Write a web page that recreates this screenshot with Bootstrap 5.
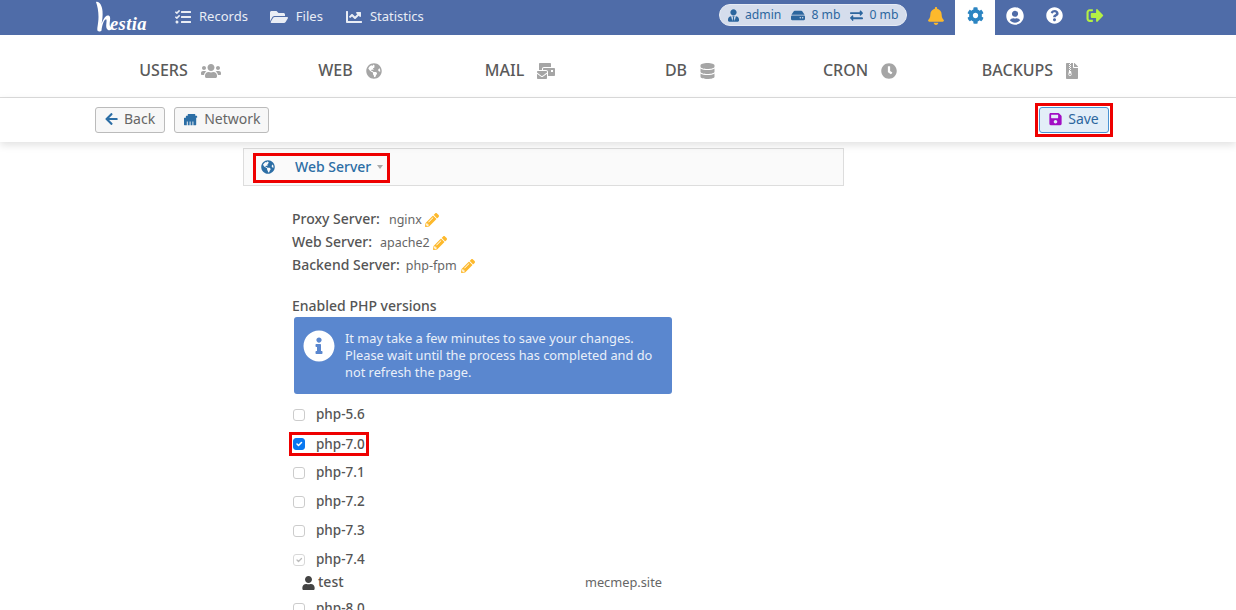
<!DOCTYPE html>
<html lang="en">
<head>
<meta charset="utf-8">
<title>Hestia</title>
<link href="https://cdn.jsdelivr.net/npm/bootstrap@5.3.0/dist/css/bootstrap.min.css" rel="stylesheet">
<style>
html,body{height:610px;overflow:hidden;background:#fff}
body{font-family:"Noto Sans","Open Sans",sans-serif;font-size:14px;color:#555;line-height:1.2}
svg.ic{fill:currentColor;display:block;flex:none}
.topbar{height:35px;background:#4f6ca8;padding-left:95px;color:#fff}
.logo-wrap{width:52px;height:35px;margin-right:28px}
.logo-txt{font-family:"Liberation Serif",serif;font-style:italic;font-weight:700;font-size:18.5px;letter-spacing:.4px;fill:#fff}
.top-link{color:#e9edf5;text-decoration:none;font-size:13px;gap:8px;margin-right:22px;padding-bottom:2px}
.top-link+.top-link+.top-link{margin-left:1px}
.pill{height:22px;width:188px;margin-left:auto;margin-bottom:5px;background:#d5ddec;border-radius:11px;color:#2c669e;font-size:12.2px;padding:0 8px;gap:6px;border:1px solid #e6ebf4;white-space:nowrap}
.pill-gap{margin-left:4px}
.bell-wrap{margin-left:21px;width:16px;color:#fdb92c;margin-bottom:4px}
.gear-tab{margin-left:11px;width:40px;height:35px;background:#fff;color:#2c85c2;padding-bottom:4px}
.right-ic{width:18px;margin-left:11px;margin-right:22px;color:#fff;margin-bottom:4px}
.right-ic+.right-ic{margin-left:0}
.exit-ic{color:#b4f044;margin-right:132px!important}
.tabsrow{height:63px;border-bottom:1px solid #ddd;padding:10px 121px 0 95px}
.tabx{width:170px;gap:13px;font-size:16px;text-decoration:none;font-weight:500;color:#5a5a5a}
.tabx svg{color:#a5a5a5}
.toolrow{height:44px;padding:5px 123px 0 95px;box-shadow:0 3px 8px rgba(0,0,0,.12);background:#fff;position:relative}
.tbtn{height:26px;padding:0 9px 2px;margin-top:4px;border:1px solid #bbb;border-radius:3px;background:#f7f7f7;color:#666;font-size:14px;gap:6px;text-decoration:none}
.tbtn svg{color:#2c6ea5}
.firstbtn{margin-right:9px}
.netbtn{gap:5px;padding-right:8px}
.savewrap{border:3px solid #e00;padding:1px;height:34px;margin-left:auto}
.savebtn{width:70px;margin-top:0;justify-content:center;background:#e3eef8;border-color:#4a93d3;color:#2c669e}
.savebtn svg{color:#a20dc4}
.mainp{padding-left:243px;padding-top:6px}
.panelb{width:601px;height:38px;border:1px solid #ddd;background:#fafafa;padding:4px 0 0 9px}
.redb{height:30px;width:137px;border:3px solid #e00;background:#fafafa;padding:0 0 2px 5px;color:#2c6ea5;font-size:14px;font-weight:500}
.redb svg{margin-right:20px}
.caretx{width:0;height:0;border:3.5px solid transparent;border-top:4px solid #aaa;border-bottom:0;margin-left:6px}
.servers{padding:22px 0 0 49px}
.srow{height:23px;font-size:14px;gap:9px;font-weight:500;color:#555}
.srow:nth-child(2){gap:8px}
.srow:nth-child(3){gap:6px}
.srow span{font-weight:400;font-size:12.5px;color:#666}
.srow a{color:#fdb92c;margin-left:-5px}
.srow:nth-child(1) a{margin-left:-6px}
.srow:nth-child(3) a{margin-left:-2px}
.phpt{font-weight:500;margin-top:18px;height:22px;padding-left:49px;font-size:14px}
.infob{margin:0 0 0 51px;width:378px;height:77px;background:#5a87cf;border-radius:3px;color:#e9eff9;font-size:12.8px;line-height:17px;padding:13px 9px 0;gap:10px}
.infob p{margin:0}
.chk{margin-left:44px;height:29px;width:97px;padding-left:6px;gap:11px;font-size:13.5px;font-weight:500;color:#555;white-space:nowrap}
.chk .form-check-input{margin:0;width:12px;height:12px;border-radius:3px;border-color:#ccc;flex:none}
.chk .form-check-input:checked{background-color:#0a78f0;border-color:#0a78f0}
.chk .form-check-input:checked:disabled{opacity:1;background-color:#fff;border-color:#d8d8d8;background-image:url("data:image/svg+xml,%3csvg xmlns='http://www.w3.org/2000/svg' viewBox='0 0 20 20'%3e%3cpath fill='none' stroke='%23bbb' stroke-linecap='round' stroke-linejoin='round' stroke-width='2.500' d='m6 10 3 3 6-6'/%3e%3c/svg%3e")}
.chkfirst{margin-top:6px}
.chkred{width:80px;height:24px;margin:3px 0 2px 46px;padding-left:1px;border:3px solid #e00}
.userline{height:17px;margin:0 0 0 59px;width:360px;font-weight:500;color:#555;gap:3px;font-size:14px}
.userline span{margin-left:auto;font-weight:400;font-size:12.8px;color:#666}
.userline svg{color:#444}
.lastchk{margin-top:3px}
</style>
</head>
<body>
<svg width="0" height="0" class="position-absolute">
<defs>
<symbol id="i-user" viewBox="0 0 448 512"><path d="M224 256c70.700 0 128-57.300 128-128S294.700 0 224 0 96 57.300 96 128s57.300 128 128 128zm89.600 32h-16.700c-22.200 10.200-46.900 16-72.900 16s-50.600-5.800-72.900-16h-16.700C60.200 288 0 348.200 0 422.400V464c0 26.500 21.500 48 48 48h352c26.500 0 48-21.500 48-48v-41.600c0-74.200-60.200-134.400-134.400-134.400z"/></symbol>
<symbol id="i-usertie" viewBox="0 0 448 512"><path d="M224 256c70.700 0 128-57.300 128-128S294.700 0 224 0 96 57.300 96 128s57.300 128 128 128zm95.800 32.600L272 480l-32-136 32-56h-96l32 56-32 136-47.800-191.400C56.900 292 0 350.300 0 422.400V464c0 26.500 21.500 48 48 48h352c26.500 0 48-21.500 48-48v-41.600c0-72.100-56.900-130.400-128.200-133.800z"/></symbol>
<symbol id="i-globe" viewBox="0 0 496 512"><path d="M248 8C111.030 8 0 119.030 0 256s111.030 248 248 248 248-111.030 248-248S384.970 8 248 8zm82.290 357.600c-3.900 3.880-7.990 7.950-11.310 11.280-2.990 3-5.100 6.700-6.170 10.710-1.510 5.660-2.730 11.380-4.770 16.870l-17.390 46.850c-13.760 3-28 4.690-42.650 4.690v-27.380c1.690-12.620-7.640-36.260-22.630-51.250-6-6-9.370-14.140-9.370-22.630v-32.010c0-11.640-6.270-22.340-16.460-27.970-14.370-7.950-34.810-19.060-48.810-26.110-11.480-5.780-22.100-13.140-31.650-21.750l-.8-.72a114.792 114.792 0 0 1-18.060-20.740c-9.380-13.770-24.660-36.420-34.590-51.140 20.470-45.500 57.360-82.040 103.200-101.890l24.010 12.010C203.480 89.740 216 82.010 216 70.110v-11.300c7.990-1.290 16.120-2.110 24.390-2.420l28.300 28.300c6.250 6.250 6.250 16.380 0 22.630L264 112l-10.340 10.340c-3.120 3.120-3.120 8.190 0 11.310l4.690 4.690c3.120 3.120 3.120 8.190 0 11.310l-8 8a8.008 8.008 0 0 1-5.660 2.340h-8.990c-2.080 0-4.080.81-5.580 2.270l-9.920 9.650a8.008 8.008 0 0 0-1.580 9.310l15.590 31.190c2.660 5.320-1.210 11.580-7.150 11.580h-5.640c-1.930 0-3.790-.7-5.240-1.960l-9.280-8.060a16.017 16.017 0 0 0-15.550-3.100l-31.170 10.390a11.950 11.950 0 0 0-8.170 11.340c0 4.530 2.560 8.660 6.610 10.690l11.080 5.540c9.410 4.710 19.790 7.160 30.310 7.160s22.590 27.290 32 32h66.750c8.490 0 16.620 3.370 22.630 9.370l13.690 13.690a30.503 30.503 0 0 1 8.930 21.570 46.536 46.536 0 0 1-13.720 32.980zM417 274.250c-5.790-1.450-10.840-5-14.150-9.970l-17.980-26.970a23.970 23.970 0 0 1 0-26.620l19.590-29.380c2.320-3.470 5.500-6.290 9.240-8.150l12.980-6.490C440.200 193.590 448 223.870 448 256c0 8.670-.74 17.160-1.820 25.540L417 274.250z"/></symbol>
<symbol id="i-clock" viewBox="0 0 512 512"><path d="M256 8C119 8 8 119 8 256s111 248 248 248 248-111 248-248S393 8 256 8zm57.100 350.100L224.900 294c-3.100-2.300-4.900-5.900-4.900-9.700V116c0-6.600 5.400-12 12-12h48c6.600 0 12 5.400 12 12v137.700l63.500 46.200c5.400 3.900 6.500 11.400 2.600 16.800l-28.200 38.800c-3.900 5.300-11.400 6.500-16.800 2.600z"/></symbol>
<symbol id="i-db" viewBox="0 0 448 512"><path d="M448 73.143v45.714C448 159.143 347.667 192 224 192S0 159.143 0 118.857V73.143C0 32.857 100.333 0 224 0s224 32.857 224 73.143zM448 176v102.857C448 319.143 347.667 352 224 352S0 319.143 0 278.857V176c48.125 33.143 136.208 48.572 224 48.572S399.874 209.143 448 176zm0 160v102.857C448 479.143 347.667 512 224 512S0 479.143 0 438.857V336c48.125 33.143 136.208 48.572 224 48.572S399.874 369.143 448 336z"/></symbol>
<symbol id="i-bell" viewBox="0 0 448 512"><path d="M224 512c35.320 0 63.970-28.650 63.970-64H160.030c0 35.350 28.650 64 63.970 64zm215.390-149.710c-19.320-20.760-55.470-51.990-55.470-154.290 0-77.700-54.480-139.900-127.940-155.160V32c0-17.670-14.320-32-31.980-32s-31.980 14.330-31.980 32v20.840C118.560 68.100 64.080 130.300 64.080 208c0 102.300-36.150 133.530-55.470 154.290-6 6.450-8.660 14.160-8.610 21.710.11 16.400 12.980 32 32.100 32h383.800c19.120 0 32-15.600 32.100-32 .05-7.550-2.610-15.270-8.610-21.710z"/></symbol>
<symbol id="i-cog" viewBox="0 0 512 512"><path d="M487.400 315.700l-42.600-24.600c4.300-23.200 4.300-47 0-70.200l42.600-24.600c4.900-2.800 7.100-8.600 5.500-14-11.100-35.600-30-67.800-54.700-94.600-3.800-4.100-10-5.100-14.800-2.300L380.800 110c-17.900-15.400-38.500-27.300-60.800-35.100V25.800c0-5.600-3.900-10.500-9.400-11.700-36.700-8.200-74.300-7.800-109.200 0-5.500 1.200-9.400 6.100-9.400 11.700V75c-22.200 7.900-42.800 19.800-60.800 35.100L88.700 85.500c-4.900-2.800-11-1.900-14.800 2.300-24.700 26.700-43.600 58.900-54.700 94.600-1.700 5.400.6 11.200 5.500 14L67.300 221c-4.300 23.200-4.300 47 0 70.200l-42.600 24.600c-4.900 2.800-7.100 8.600-5.500 14 11.100 35.600 30 67.800 54.700 94.600 3.800 4.100 10 5.100 14.800 2.300l42.600-24.600c17.900 15.400 38.500 27.300 60.800 35.100v49.200c0 5.600 3.900 10.500 9.400 11.700 36.700 8.200 74.300 7.800 109.200 0 5.500-1.200 9.400-6.100 9.400-11.700v-49.200c22.200-7.900 42.800-19.800 60.800-35.100l42.600 24.600c4.900 2.800 11 1.900 14.800-2.300 24.700-26.700 43.600-58.900 54.700-94.600 1.500-5.500-.7-11.300-5.600-14.100zM256 336c-44.100 0-80-35.900-80-80s35.900-80 80-80 80 35.900 80 80-35.900 80-80 80z"/></symbol>
<symbol id="i-ucircle" viewBox="0 0 496 512"><path d="M248 8C111 8 0 119 0 256s111 248 248 248 248-111 248-248S385 8 248 8zm0 96c48.600 0 88 39.400 88 88s-39.400 88-88 88-88-39.400-88-88 39.400-88 88-88zm0 344c-58.700 0-111.300-26.600-146.500-68.200 18.800-35.400 55.600-59.800 98.500-59.800 2.400 0 4.800.4 7.100 1.100 13 4.200 26.600 6.900 40.900 6.900 14.300 0 28-2.700 40.900-6.900 2.300-.7 4.700-1.100 7.100-1.100 42.900 0 79.700 24.400 98.500 59.800C359.300 421.400 306.700 448 248 448z"/></symbol>
<symbol id="i-help" viewBox="0 0 512 512"><path d="M504 256c0 136.997-111.043 248-248 248S8 392.997 8 256C8 119.083 119.043 8 256 8s248 111.083 248 248zM262.655 90c-54.497 0-89.255 22.957-116.549 63.758-3.536 5.286-2.353 12.415 2.715 16.258l34.699 26.310c5.205 3.947 12.621 3.008 16.665-2.122 17.864-22.658 30.113-35.797 57.303-35.797 20.429 0 45.698 13.148 45.698 32.958 0 14.976-12.363 22.667-32.534 33.976C247.128 238.528 216 254.941 216 296v4c0 6.627 5.373 12 12 12h56c6.627 0 12-5.373 12-12v-1.333c0-28.462 83.186-29.647 83.186-106.667 0-58.002-60.165-102-116.531-102zM256 338c-25.365 0-46 20.635-46 46 0 25.364 20.635 46 46 46s46-20.636 46-46c0-25.365-20.635-46-46-46z"/></symbol>
<symbol id="i-info" viewBox="0 0 512 512"><path d="M256 8C119.043 8 8 119.083 8 256c0 136.997 111.043 248 248 248s248-111.003 248-248C504 119.083 392.957 8 256 8zm0 110c23.196 0 42 18.804 42 42s-18.804 42-42 42-42-18.804-42-42 18.804-42 42-42zm56 254c0 6.627-5.373 12-12 12h-88c-6.627 0-12-5.373-12-12v-24c0-6.627 5.373-12 12-12h12v-64h-12c-6.627 0-12-5.373-12-12v-24c0-6.627 5.373-12 12-12h64c6.627 0 12 5.373 12 12v100h12c6.627 0 12 5.373 12 12v24z"/></symbol>
<symbol id="i-save" viewBox="0 0 448 512"><path d="M433.941 129.941l-83.882-83.882A48 48 0 0 0 316.118 32H48C21.490 32 0 53.490 0 80v352c0 26.510 21.490 48 48 48h352c26.510 0 48-21.490 48-48V163.882a48 48 0 0 0-14.059-33.941zM224 416c-35.346 0-64-28.654-64-64 0-35.346 28.654-64 64-64s64 28.654 64 64c0 35.346-28.654 64-64 64zm96-304.520V212c0 6.627-5.373 12-12 12H76c-6.627 0-12-5.373-12-12V108c0-6.627 5.373-12 12-12h228.520c3.183 0 6.235 1.264 8.485 3.515l3.480 3.480A11.996 11.996 0 0 1 320 111.480z"/></symbol>
<symbol id="i-left" viewBox="0 0 448 512"><path d="M257.500 445.100l-22.200 22.200c-9.400 9.400-24.600 9.400-33.900 0L7 273c-9.400-9.400-9.400-24.600 0-33.900L201.400 44.700c9.400-9.400 24.600-9.400 33.900 0l22.200 22.200c9.500 9.500 9.300 25-.4 34.300L136.600 216H424c13.300 0 24 10.700 24 24v32c0 13.300-10.700 24-24 24H136.600l120.500 114.800c9.800 9.300 10 24.800.4 34.300z"/></symbol>
<symbol id="i-pen" viewBox="0 0 512 512"><path d="M497.900 142.100l-46.100 46.100c-4.700 4.700-12.300 4.700-17 0l-111-111c-4.700-4.700-4.700-12.300 0-17l46.100-46.100c18.700-18.700 49.100-18.700 67.900 0l60.100 60.100c18.800 18.700 18.800 49.100 0 67.900zM284.200 99.800L21.600 362.400.4 483.900c-2.900 16.400 11.400 30.600 27.800 27.800l121.500-21.300 262.600-262.600c4.700-4.700 4.700-12.300 0-17l-111-111c-4.800-4.700-12.400-4.700-17.100 0zM124.100 339.900c-5.500-5.500-5.500-14.300 0-19.800l154-154c5.500-5.500 14.300-5.500 19.800 0s5.500 14.300 0 19.800l-154 154c-5.500 5.500-14.300 5.500-19.800 0zM88 424h48v36.300l-64.500 11.300-31.100-31.100L51.700 376H88v48z"/></symbol>
<symbol id="i-users" viewBox="0 0 640 512"><path d="M96 224c35.300 0 64-28.700 64-64s-28.700-64-64-64-64 28.700-64 64 28.700 64 64 64zm448 0c35.300 0 64-28.700 64-64s-28.700-64-64-64-64 28.700-64 64 28.700 64 64 64zm32 32h-64c-17.600 0-33.500 7.100-45.100 18.600 40.300 22.100 68.900 62 75.100 109.400h66c17.700 0 32-14.300 32-32v-32c0-35.300-28.700-64-64-64zm-256 0c61.900 0 112-50.100 112-112S381.900 32 320 32 208 82.100 208 144s50.100 112 112 112zm76.800 32h-8.300c-20.800 10-43.900 16-68.500 16s-47.600-6-68.500-16h-8.300C179.600 288 128 339.600 128 403.200V432c0 26.500 21.500 48 48 48h288c26.500 0 48-21.500 48-48v-28.800c0-63.600-51.600-115.200-115.200-115.200zm-223.700-13.400C161.500 263.100 145.600 256 128 256H64c-35.300 0-64 28.700-64 64v32c0 17.700 14.300 32 32 32h65.900c6.300-47.400 34.900-87.300 75.200-109.400z"/></symbol>
<symbol id="i-folder" viewBox="0 0 576 512"><path d="M572.694 292.093L500.270 416.248A63.997 63.997 0 0 1 444.989 448H45.025c-18.523 0-30.064-20.093-20.731-36.093l72.424-124.155A64 64 0 0 1 152 256h399.964c18.523 0 30.064 20.093 20.730 36.093zM152 224h328v-48c0-26.510-21.490-48-48-48H272l-64-64H48C21.490 64 0 85.490 0 112v278.046l69.077-118.418C86.214 242.250 117.989 224 152 224z"/></symbol>
<symbol id="i-chart" viewBox="0 0 512 512"><path d="M496 384H64V80c0-8.840-7.160-16-16-16H16C7.160 64 0 71.160 0 80v336c0 17.670 14.330 32 32 32h464c8.840 0 16-7.160 16-16v-32c0-8.840-7.160-16-16-16zM464 96H345.940c-21.380 0-32.090 25.850-16.970 40.970l32.400 32.400L288 242.750l-73.370-73.370c-12.500-12.500-32.760-12.500-45.250 0l-68.690 68.690c-6.250 6.250-6.250 16.380 0 22.630l22.620 22.620c6.250 6.250 16.380 6.250 22.630 0L192 237.250l73.370 73.370c12.500 12.500 32.760 12.500 45.250 0l96-96 32.400 32.400c15.120 15.120 40.970 4.410 40.970-16.970V112c0-8.840-7.160-16-16-16z"/></symbol>
<symbol id="i-swap" viewBox="0 0 512 512"><path d="M0 168v-16c0-13.255 10.745-24 24-24h360V80c0-21.367 25.899-32.042 40.971-16.971l80 80c9.372 9.373 9.372 24.569 0 33.941l-80 80C409.956 271.982 384 261.456 384 240v-48H24c-13.255 0-24-10.745-24-24zm488 152H128v-48c0-21.314-25.862-32.080-40.971-16.971l-80 80c-9.372 9.373-9.372 24.569 0 33.941l80 80C102.057 482.028 128 471.543 128 448v-48h360c13.255 0 24-10.745 24-24v-16c0-13.255-10.745-24-24-24z"/></symbol>
<symbol id="i-hdd" viewBox="0 0 576 512"><path d="M576 304v96c0 26.510-21.490 48-48 48H48c-26.510 0-48-21.490-48-48v-96c0-26.510 21.490-48 48-48h480c26.510 0 48 21.490 48 48zm-48-80a79.557 79.557 0 0 1 30.777 6.165L462.250 85.374A48.003 48.003 0 0 0 422.311 64H153.689a48 48 0 0 0-39.938 21.374L17.223 230.165A79.557 79.557 0 0 1 48 224h480zm-48 96c-17.673 0-32 14.327-32 32s14.327 32 32 32 32-14.327 32-32-14.327-32-32-32zm-96 0c-17.673 0-32 14.327-32 32s14.327 32 32 32 32-14.327 32-32-14.327-32-32-32z"/></symbol>
<symbol id="i-tasks" viewBox="0 0 512 512"><path d="M139.610 35.500a12 12 0 0 0-17 0L58.930 98.810l-22.700-22.120a12 12 0 0 0-17 0L3.530 92.410a12 12 0 0 0 0 17l47.590 47.400a12.780 12.780 0 0 0 17.610 0l15.590-15.620L156.520 69a12.090 12.090 0 0 0 .09-17zm0 159.190a12 12 0 0 0-17 0l-63.680 63.720-22.700-22.100a12 12 0 0 0-17 0L3.530 252a12 12 0 0 0 0 17L51 316.500a12.770 12.770 0 0 0 17.600 0l15.700-15.690 72.200-72.220a12 12 0 0 0 .09-16.900zM64 368c-26.490 0-48.590 21.500-48.590 48S37.530 464 64 464a48 48 0 0 0 0-96zm432 16H208a16 16 0 0 0-16 16v32a16 16 0 0 0 16 16h288a16 16 0 0 0 16-16v-32a16 16 0 0 0-16-16zm0-320H208a16 16 0 0 0-16 16v32a16 16 0 0 0 16 16h288a16 16 0 0 0 16-16V80a16 16 0 0 0-16-16zm0 160H208a16 16 0 0 0-16 16v32a16 16 0 0 0 16 16h288a16 16 0 0 0 16-16v-32a16 16 0 0 0-16-16z"/></symbol>
<symbol id="i-exit" viewBox="0 0 512 512"><path d="M497 273L329 441c-15 15-41 4.500-41-17v-96H152c-13.300 0-24-10.700-24-24v-96c0-13.300 10.700-24 24-24h136V88c0-21.400 25.900-32 41-17l168 168c9.300 9.400 9.300 24.600 0 34zM192 436v-40c0-6.600-5.400-12-12-12H96c-17.700 0-32-14.300-32-32V160c0-17.700 14.300-32 32-32h84c6.600 0 12-5.400 12-12V76c0-6.600-5.400-12-12-12H96c-53 0-96 43-96 96v192c0 53 43 96 96 96h84c6.600 0 12-5.400 12-12z"/></symbol>
<symbol id="i-mail" viewBox="0 0 576 512"><path d="M160 448c-25.600 0-51.200-22.400-64-32-64-44.800-83.200-60.800-96-70.400V480c0 17.670 14.330 32 32 32h256c17.670 0 32-14.330 32-32V345.600c-12.800 9.600-32 25.600-96 70.400-12.800 9.600-38.400 32-64 32zm128-192H32c-17.670 0-32 14.330-32 32v16c25.600 19.200 22.400 19.200 115.200 86.400 9.600 6.400 28.800 25.600 44.800 25.600s35.200-19.200 44.800-22.400c92.800-67.200 89.600-67.200 115.200-86.400V288c0-17.670-14.330-32-32-32zm256-96H224c-17.670 0-32 14.330-32 32v32h96c33.210 0 60.590 25.420 63.710 57.820l.29-.22V416h192c17.670 0 32-14.330 32-32V192c0-17.670-14.330-32-32-32zm-32 128h-64v-64h64v64zm-352-96c0-35.290 28.710-64 64-64h224V32c0-17.670-14.330-32-32-32H96C78.330 0 64 14.330 64 32v192h96v-32z"/></symbol>
<symbol id="i-zip" viewBox="0 0 384 512"><path d="M377 105L279.100 7c-4.500-4.500-10.600-7-17-7H256v128h128v-6.100c0-6.300-2.500-12.400-7-16.900zM128.400 336c-17.900 0-32.400 12.100-32.400 27 0 15 14.600 27 32.500 27s32.400-12.100 32.400-27-14.600-27-32.500-27zM224 136V0h-63.600v32h-32V0H24C10.700 0 0 10.700 0 24v464c0 13.300 10.700 24 24 24h336c13.300 0 24-10.700 24-24V160H248c-13.200 0-24-10.800-24-24zM95.900 32h32v32h-32zm32.300 384c-33.200 0-58-30.400-51.400-62.900L96.400 256v-32h32v-32h-32v-32h32v-32h-32V96h32V64h32v32h-32v32h32v32h-32v32h32v32h-32v32h22.100c5.700 0 10.700 4.100 11.800 9.700l17.300 87.700c6.400 32.400-18.400 62.600-51.400 62.600z"/></symbol>
<symbol id="i-net" viewBox="0 0 512 512"><path d="M496 192h-48v-48c0-8.800-7.200-16-16-16h-48V80c0-8.800-7.200-16-16-16H144c-8.800 0-16 7.200-16 16v48H80c-8.800 0-16 7.200-16 16v48H16c-8.800 0-16 7.200-16 16v224c0 8.800 7.200 16 16 16h80V320h32v128h64V320h32v128h64V320h32v128h80c8.800 0 16-7.200 16-16V208c0-8.800-7.200-16-16-16z"/></symbol>
</defs>
</svg>

<header class="topbar d-flex align-items-center">
  <a href="#" class="logo-wrap d-block text-decoration-none">
    <svg width="52" height="35" viewBox="0 0 52 35">
      <path d="M1 2c3-1 6 3 6.500 9 .4 5-.2 9-1 13 1.500-4 3.500-8 6-8.500 2.500-.4 3 2 2.500 5-.4 3-.7 5 .5 6.500 1 1 2 .5 2.500 0-.8 2.500-3 4-5 3-2-1.200-2-3.800-1.600-7 .3-2.500.3-4-.8-3.600-2 .8-3.500 6-4.100 11-.6 1-2.500 1.500-3.800.6C1.500 29 3.500 24 3.500 17 3.500 11 2.500 6 1 2z" fill="#fff"/>
      <text x="15" y="30" class="logo-txt">estia</text>
    </svg>
  </a>
  <a href="#" class="top-link d-flex align-items-center"><svg class="ic" width="16" height="16"><use href="#i-tasks"/></svg>Records</a>
  <a href="#" class="top-link d-flex align-items-center"><svg class="ic" width="18" height="16"><use href="#i-folder"/></svg>Files</a>
  <a href="#" class="top-link d-flex align-items-center"><svg class="ic" width="16" height="16"><use href="#i-chart"/></svg>Statistics</a>
  <div class="pill d-flex align-items-center">
    <svg class="ic" width="11" height="13"><use href="#i-usertie"/></svg>admin
    <svg class="ic pill-gap" width="14" height="13"><use href="#i-hdd"/></svg>8 mb
    <svg class="ic pill-gap" width="13" height="13"><use href="#i-swap"/></svg>0 mb
  </div>
  <div class="bell-wrap"><svg class="ic" width="16" height="18"><use href="#i-bell"/></svg></div>
  <div class="gear-tab d-flex align-items-center justify-content-center"><svg class="ic" width="17" height="17"><use href="#i-cog"/></svg></div>
  <div class="right-ic"><svg class="ic" width="18" height="18"><use href="#i-ucircle"/></svg></div>
  <div class="right-ic"><svg class="ic" width="17" height="17"><use href="#i-help"/></svg></div>
  <div class="right-ic exit-ic"><svg class="ic" width="18" height="17"><use href="#i-exit"/></svg></div>
</header>

<nav class="tabsrow d-flex">
  <a href="#" class="tabx d-flex align-items-center justify-content-center">USERS<svg class="ic" width="20" height="16"><use href="#i-users"/></svg></a>
  <a href="#" class="tabx d-flex align-items-center justify-content-center">WEB<svg class="ic" width="16" height="16"><use href="#i-globe"/></svg></a>
  <a href="#" class="tabx d-flex align-items-center justify-content-center">MAIL<svg class="ic" width="18" height="16"><use href="#i-mail"/></svg></a>
  <a href="#" class="tabx d-flex align-items-center justify-content-center">DB<svg class="ic" width="15" height="16"><use href="#i-db"/></svg></a>
  <a href="#" class="tabx d-flex align-items-center justify-content-center">CRON<svg class="ic" width="16" height="16"><use href="#i-clock"/></svg></a>
  <a href="#" class="tabx d-flex align-items-center justify-content-center">BACKUPS<svg class="ic" width="12" height="16"><use href="#i-zip"/></svg></a>
</nav>

<div class="toolrow d-flex align-items-start">
  <a href="#" class="tbtn firstbtn d-flex align-items-center"><svg class="ic" width="13" height="14"><use href="#i-left"/></svg>Back</a>
  <a href="#" class="tbtn netbtn d-flex align-items-center"><svg class="ic" width="15" height="15"><use href="#i-net"/></svg>Network</a>
  <div class="savewrap"><a href="#" class="tbtn savebtn d-flex align-items-center"><svg class="ic" width="13" height="14"><use href="#i-save"/></svg>Save</a></div>
</div>

<main class="mainp">
  <div class="panelb">
    <div class="redb d-flex align-items-center">
      <svg class="ic" width="14" height="14"><use href="#i-globe"/></svg>Web Server<i class="caretx"></i>
    </div>
  </div>
  <div class="servers">
    <div class="srow d-flex align-items-center">Proxy Server: <span>nginx</span><a href="#"><svg class="ic" width="14" height="14"><use href="#i-pen"/></svg></a></div>
    <div class="srow d-flex align-items-center">Web Server: <span>apache2</span><a href="#"><svg class="ic" width="14" height="14"><use href="#i-pen"/></svg></a></div>
    <div class="srow d-flex align-items-center">Backend Server: <span>php-fpm</span><a href="#"><svg class="ic" width="14" height="14"><use href="#i-pen"/></svg></a></div>
  </div>
  <div class="phpt d-flex align-items-center">Enabled PHP versions</div>
  <div class="infob d-flex">
    <svg class="ic text-white" width="32" height="32"><use href="#i-info"/></svg>
    <p>It may take a few minutes to save your changes. Please wait until the process has completed and do not refresh the page.</p>
  </div>
  <label class="chk chkfirst d-flex align-items-center"><input class="form-check-input" type="checkbox">php-5.6</label>
  <label class="chk chkred d-flex align-items-center"><input class="form-check-input" type="checkbox" checked>php-7.0</label>
  <label class="chk d-flex align-items-center"><input class="form-check-input" type="checkbox">php-7.1</label>
  <label class="chk d-flex align-items-center"><input class="form-check-input" type="checkbox">php-7.2</label>
  <label class="chk d-flex align-items-center"><input class="form-check-input" type="checkbox">php-7.3</label>
  <label class="chk d-flex align-items-center"><input class="form-check-input" type="checkbox" checked disabled>php-7.4</label>
  <div class="userline d-flex align-items-center"><svg class="ic" width="13" height="14"><use href="#i-user"/></svg>test<span>mecmep.site</span></div>
  <label class="chk lastchk d-flex align-items-center"><input class="form-check-input" type="checkbox">php-8.0</label>
</main>
<script src="https://cdn.jsdelivr.net/npm/bootstrap@5.3.0/dist/js/bootstrap.bundle.min.js"></script>
</body>
</html>
